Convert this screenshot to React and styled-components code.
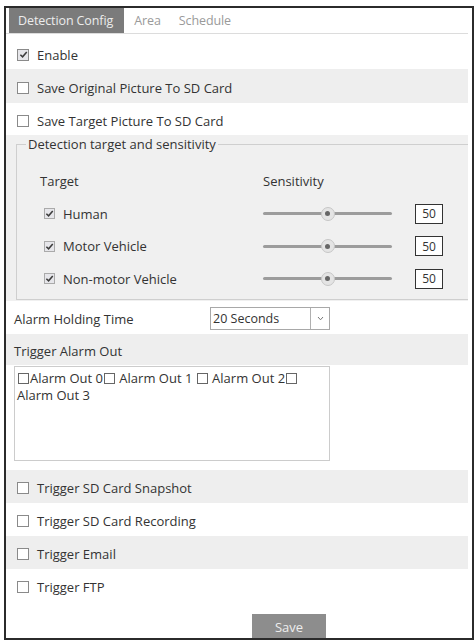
import React from "react";
import styled, { createGlobalStyle } from "styled-components";

const Global = createGlobalStyle`
  html, body { margin: 0; padding: 0; background: #fff; }
  body { font-family: "Open Sans", "Noto Sans", "Liberation Sans", sans-serif; color: #333; }
  * { box-sizing: border-box; }
`;

const Frame = styled.div`
  margin: 6px 0 0 4px;
  width: 470px;
  height: 634px;
  border: 2px solid #2b2b2b;
  overflow: hidden;
  display: flex;
  flex-direction: column;
  padding-right: 4px;
`;

const TabBar = styled.div`
  height: 28px;
  display: flex;
  align-items: flex-end;
  padding-left: 3px;
  border-bottom: 1px solid #dcdcdc;
`;

const Tab = styled.div`
  height: 25px;
  display: flex;
  align-items: center;
  padding: ${(p) => (p.$active ? "0 11px 0 9px" : "0 9px")};
  margin-right: ${(p) => (p.$active ? "1px" : "0")};
  background: ${(p) => (p.$active ? "#7b7b7b" : "transparent")};
  color: ${(p) => (p.$active ? "#ececec" : "#9a9a9a")};
  font-size: 12.5px;
  letter-spacing: -0.1px;
`;

const Row = styled.div`
  height: ${(p) => p.$h || 33}px;
  display: flex;
  align-items: center;
  padding-left: ${(p) => p.$pad ?? 11}px;
  padding-top: ${(p) => p.$top ?? 2}px;
  background: ${(p) => (p.$grey ? "#eeeeee" : "#ffffff")};
  font-size: 13px;
  flex-shrink: 0;
`;

const Box = styled.span`
  width: ${(p) => p.$size || 12}px;
  height: ${(p) => p.$size || 12}px;
  border: 1px solid ${(p) => p.$border || "#8a8a8a"};
  background: ${(p) => (p.$checked ? "#e6e6ea" : "#fff")};
  display: inline-flex;
  align-items: center;
  justify-content: center;
  margin-right: ${(p) => p.$gap ?? 8}px;
  flex-shrink: 0;
`;

const Check = ({ checked, size, gap, border }) => (
  <Box $checked={checked} $size={size} $gap={gap} $border={border}>
    {checked && (
      <svg width="9" height="9" viewBox="0 0 10 10">
        <path d="M1.5 5.2 L4 7.6 L8.6 2.2" fill="none" stroke="#3c3c3c" strokeWidth="1.7" />
      </svg>
    )}
  </Box>
);

const Section = styled.div`
  background: #f0f0f0;
  height: 166px;
  padding: 1px 0 0 10px;
  flex-shrink: 0;
`;

const Fieldset = styled.fieldset`
  margin: 0;
  height: 164px;
  border: 1px solid #cfcfcf;
  border-right: none;
  padding: 12px 0 0 23px;
  min-width: 0;
`;

const Legend = styled.legend`
  font-size: 13px;
  padding: 0 2px;
  margin-left: -14px;
  line-height: 17px;
`;

const Grid = styled.div`
  display: grid;
  grid-template-columns: 200px 129px 28px;
  column-gap: 23px;
  grid-auto-rows: 32.5px;
  align-items: center;
  font-size: 13px;
`;

const TargetCell = styled.div`
  display: flex;
  align-items: center;
  padding-left: ${(p) => (p.$indent ? 4 : 0)}px;
`;

const Slider = styled.div`
  position: relative;
  height: 16px;
  display: flex;
  align-items: center;
`;

const Track = styled.div`
  width: 100%;
  height: 3px;
  background: #9c9c9c;
  border-radius: 2px;
`;

const Thumb = styled.div`
  position: absolute;
  top: 50%;
  width: 14px;
  height: 14px;
  margin: -7px 0 0 -7px;
  border-radius: 50%;
  background: #e4e4e4;
  border: 1px solid #c6c6c6;
  display: flex;
  align-items: center;
  justify-content: center;
  &::after {
    content: "";
    width: 5px;
    height: 5px;
    border-radius: 50%;
    background: #666;
  }
`;

const ValueBox = styled.div`
  width: 28px;
  height: 20px;
  border: 1px solid #333;
  background: #fff;
  font-size: 12px;
  display: flex;
  align-items: center;
  justify-content: center;
`;

const Label = styled.span`
  width: ${(p) => p.$w}px;
  flex-shrink: 0;
`;

const Select = styled.div`
  width: 120px;
  height: 23px;
  border: 1px solid #a8a8a8;
  display: flex;
  align-items: center;
  font-size: 12.5px;
  background: #fff;
`;

const SelectText = styled.span`
  flex: 1;
  padding-left: 2px;
`;

const Arrow = styled.span`
  width: 19px;
  height: 100%;
  border-left: 1px solid #b0b0b0;
  display: flex;
  align-items: center;
  justify-content: center;
`;

const AreaWrap = styled.div`
  height: 105px;
  padding: 1px 0 0 8px;
  background: #fff;
  flex-shrink: 0;
`;

const TextArea = styled.div`
  width: 316px;
  height: 95px;
  border: 1px solid #cccccc;
  padding: 3px 0 0 2px;
  font-size: 13px;
  line-height: 17px;
  color: #333;
`;

const InlineBox = styled.span`
  display: inline-block;
  width: 11px;
  height: 11px;
  border: 1px solid #666;
  vertical-align: -1px;
  margin: 0 1px 0 1px;
`;

const Footer = styled.div`
  flex: 1;
  padding: 12px 0 0 246px;
  background: #fff;
`;

const SaveButton = styled.div`
  width: 74px;
  height: 26px;
  background: #8d8d8d;
  color: #eeeeee;
  font-size: 13px;
  display: flex;
  align-items: center;
  justify-content: center;
`;

const targets = ["Human", "Motor Vehicle", "Non-motor Vehicle"];

export default function App() {
  return (
    <>
      <Global />
      <Frame>
        <TabBar>
          <Tab $active>Detection Config</Tab>
          <Tab>Area</Tab>
          <Tab>Schedule</Tab>
        </TabBar>
        <Row $h={35} $top={6}>
          <Check checked />
          Enable
        </Row>
        <Row $h={34} $top={4} $grey>
          <Check />
          Save Original Picture To SD Card
        </Row>
        <Row $h={32} $top={3}>
          <Check />
          Save Target Picture To SD Card
        </Row>
        <Section>
          <Fieldset>
            <Legend>Detection target and sensitivity</Legend>
            <Grid>
              <div>Target</div>
              <div>Sensitivity</div>
              <div />
              {targets.map((t) => (
                <React.Fragment key={t}>
                  <TargetCell $indent>
                    <Check checked size={11} gap={8} border="#aaa" />
                    {t}
                  </TargetCell>
                  <Slider>
                    <Track />
                    <Thumb style={{ left: "50%" }} />
                  </Slider>
                  <ValueBox>50</ValueBox>
                </React.Fragment>
              ))}
            </Grid>
          </Fieldset>
        </Section>
        <Row $h={33} $pad={8}>
          <Label $w={196}>Alarm Holding Time</Label>
          <Select>
            <SelectText>20 Seconds</SelectText>
            <Arrow>
              <svg width="7" height="5" viewBox="0 0 7 5">
                <path d="M1 1 L3.5 3.8 L6 1" fill="none" stroke="#777" strokeWidth="1" />
              </svg>
            </Arrow>
          </Select>
        </Row>
        <Row $h={31} $pad={8} $grey>
          Trigger Alarm Out
        </Row>
        <AreaWrap>
          <TextArea>
            <InlineBox />Alarm Out 0<InlineBox /> Alarm Out 1 <InlineBox /> Alarm Out 2<InlineBox /> Alarm Out 3
          </TextArea>
        </AreaWrap>
        <Row $grey>
          <Check />
          Trigger SD Card Snapshot
        </Row>
        <Row>
          <Check />
          Trigger SD Card Recording
        </Row>
        <Row $grey>
          <Check />
          Trigger Email
        </Row>
        <Row>
          <Check />
          Trigger FTP
        </Row>
        <Footer>
          <SaveButton>Save</SaveButton>
        </Footer>
      </Frame>
    </>
  );
}
